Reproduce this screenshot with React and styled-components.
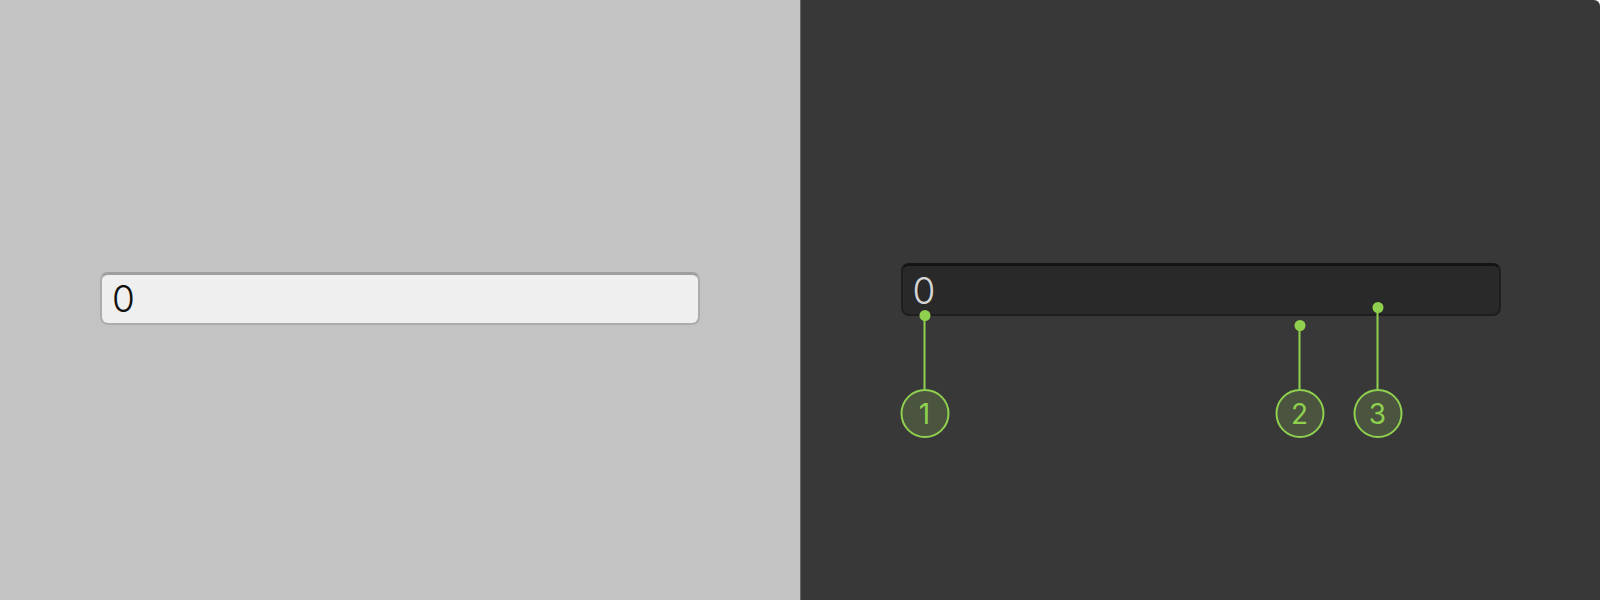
import React from "react";
import styled, { createGlobalStyle } from "styled-components";

const GlobalStyle = createGlobalStyle`
  html, body {
    margin: 0;
    padding: 0;
    background: #ffffff;
  }
  * {
    box-sizing: border-box;
  }
`;

const Frame = styled.div`
  display: flex;
  width: 1600px;
  height: 600px;
  overflow: hidden;
  border-top-right-radius: 6px;
  font-family: "Inter", "Liberation Sans", sans-serif;
`;

const Panel = styled.div`
  flex: ${(props) => (props.dark ? "1 1 auto" : "0 0 800px")};
  display: flex;
  align-items: center;
  justify-content: center;
  background: ${(props) => (props.dark ? "#383838" : "#c3c3c3")};
`;

const Divider = styled.div`
  flex: 0 0 1px;
  background: #646464;
`;

const Stage = styled.div`
  position: relative;
  width: 600px;
  margin-bottom: ${(props) => props.lift || 0}px;
`;

const Field = styled.input`
  display: block;
  width: 100%;
  height: 53px;
  padding: 0 10px;
  border-radius: 8px;
  font-family: inherit;
  font-size: 37px;
  font-weight: 300;
  outline: none;
  border: 2px solid ${(props) => (props.dark ? "#1e1e1e" : "#acacac")};
  border-top: 3px solid ${(props) => (props.dark ? "#141414" : "#9e9e9e")};
  background: ${(props) => (props.dark ? "#292929" : "#efefef")};
  color: ${(props) => (props.dark ? "#d6d6d6" : "#111111")};
`;

const Callout = styled.div`
  position: absolute;
  top: ${(props) => props.y - 5}px;
  left: ${(props) => props.x}px;
  transform: translateX(-50%);
  display: flex;
  flex-direction: column;
  align-items: center;
`;

const Pin = styled.div`
  width: 11px;
  height: 11px;
  border-radius: 50%;
  background: #8fd14f;
`;

const Stem = styled.div`
  width: 2px;
  height: ${(props) => props.length}px;
  margin-top: -5px;
  background: #8fd14f;
`;

const Badge = styled.div`
  width: 49px;
  height: 49px;
  border-radius: 50%;
  border: 2px solid #8fd14f;
  background: #4a543f;
  color: #8fd14f;
  display: flex;
  align-items: center;
  justify-content: center;
  font-size: 28px;
  line-height: 1;
`;

const BADGE_TOP = 125;

const callouts = [
  { n: 1, x: 24, y: 52 },
  { n: 2, x: 399, y: 62 },
  { n: 3, x: 477, y: 44 },
];

export default function App() {
  return (
    <>
      <GlobalStyle />
      <Frame>
        <Panel>
          <Stage lift={4}>
            <Field defaultValue="0" />
          </Stage>
        </Panel>
        <Divider />
        <Panel dark>
          <Stage lift={21}>
            <Field dark defaultValue="0" />
            {callouts.map((c) => (
              <Callout key={c.n} x={c.x} y={c.y}>
                <Pin />
                <Stem length={BADGE_TOP - c.y} />
                <Badge>{c.n}</Badge>
              </Callout>
            ))}
          </Stage>
        </Panel>
      </Frame>
    </>
  );
}
